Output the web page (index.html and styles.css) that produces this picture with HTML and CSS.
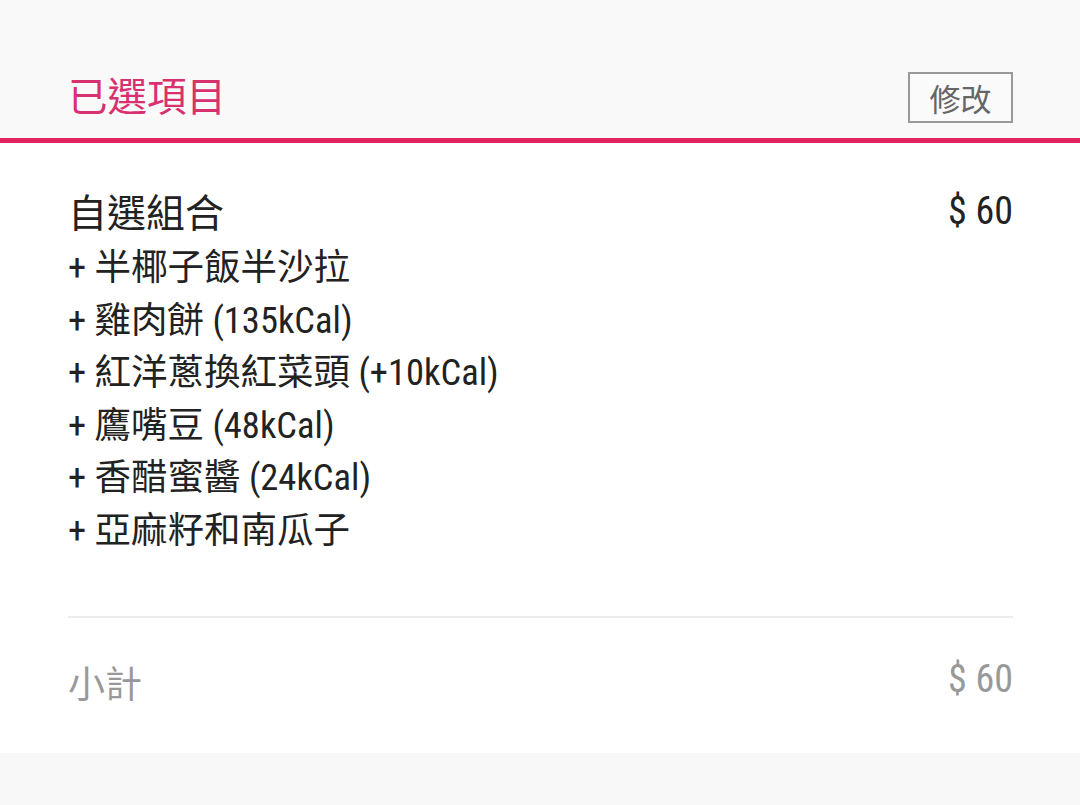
FILE: index.html
```html
<!DOCTYPE html>
<html lang="zh-Hant">
<head>
<meta charset="utf-8">
<link rel="stylesheet" href="styles.css">
</head>
<body>
<div class="page">
  <header class="header">
    <h1 class="title">已選項目</h1>
    <button class="edit-btn">修改</button>
  </header>
  <section class="content">
    <div class="item">
      <div class="item-info">
        <div class="item-name">自選組合</div>
        <ul class="options">
          <li>+ 半椰子飯半沙拉</li>
          <li>+ 雞肉餅 (135kCal)</li>
          <li>+ 紅洋蔥換紅菜頭 (+10kCal)</li>
          <li>+ 鷹嘴豆 (48kCal)</li>
          <li>+ 香醋蜜醬 (24kCal)</li>
          <li>+ 亞麻籽和南瓜子</li>
        </ul>
      </div>
      <div class="item-price">$ 60</div>
    </div>
    <hr class="divider">
    <div class="subtotal">
      <span>小計</span>
      <span class="subtotal-price">$ 60</span>
    </div>
  </section>
  <div class="footer-band"></div>
</div>
</body>
</html>
```

FILE: styles.css
```css
html, body {
  margin: 0;
  padding: 0;
  background: #ffffff;
}
body {
  font-family: "Roboto Condensed", Roboto, "Noto Sans CJK TC", sans-serif;
  color: #222222;
  width: 1080px;
  height: 805px;
  overflow: hidden;
}
.page {
  display: flex;
  flex-direction: column;
  height: 805px;
}
.header {
  box-sizing: border-box;
  height: 143px;
  background: #f9f9fa;
  border-bottom: 5px solid #e0245f;
  display: flex;
  align-items: center;
  justify-content: space-between;
  padding: 56px 67px 0 68px;
}
.title {
  margin: 0 0 6px 0;
  font-weight: 400;
  font-size: 39.5px;
  line-height: 1;
  color: #d9306f;
  font-family: "Noto Sans CJK TC", sans-serif;
}
.edit-btn {
  width: 105px;
  height: 51px;
  border: 2px solid #999999;
  background: #fafafa;
  color: #666666;
  font-family: "Noto Sans CJK TC", sans-serif;
  font-size: 31px;
  line-height: 1;
  padding: 0;
  border-radius: 0;
}
.content {
  padding: 44px 67px 41px 68px;
  background: #ffffff;
}
.item {
  display: flex;
  justify-content: space-between;
  align-items: flex-start;
}
.item-name {
  font-size: 39px;
  line-height: 55px;
}
.options {
  list-style: none;
  margin: 0;
  padding: 0;
}
.options li {
  font-size: 36.5px;
  line-height: 52.6px;
}
.item-price {
  font-size: 38px;
  line-height: 48px;
  color: #222222;
}
.divider {
  margin: 58px 0 0 0;
  border: 0;
  height: 2px;
  background: #ececec;
}
.subtotal {
  margin-top: 41px;
  display: flex;
  justify-content: space-between;
  color: #999999;
  font-size: 37px;
  line-height: 53px;
}
.subtotal-price {
  position: relative;
  top: -6px;
  font-size: 38px;
}
.footer-band {
  flex: 1;
  background: #f8f8f8;
}
```
